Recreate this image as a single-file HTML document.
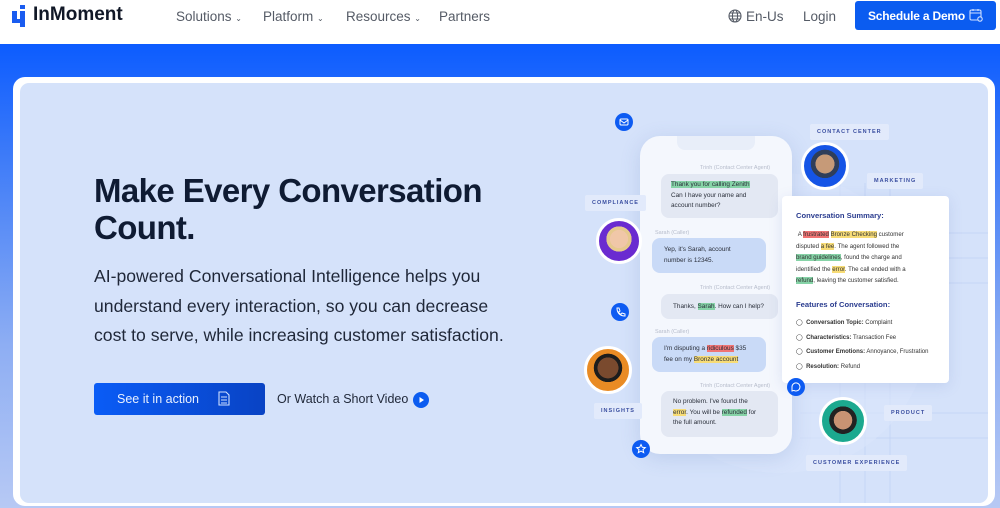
<!DOCTYPE html>
<html><head><meta charset="utf-8"><style>
*{margin:0;padding:0;box-sizing:border-box}
body{width:1000px;height:508px;overflow:hidden;font-family:"Liberation Sans",sans-serif;background:#fff;position:relative}
.a{position:absolute}
.nav{color:#555b66;font-size:13.5px;top:9px}
.band{left:0;top:44px;width:1000px;height:464px;background:linear-gradient(#0c5cff 0%,#3f7cf8 25%,#8eaef3 65%,#b7c9f4 100%)}
.card{left:13px;top:77px;width:982px;height:429px;background:#fff;border-radius:12px}
.inner{left:20px;top:83px;width:968px;height:420px;background:#d5e2fa;border-radius:9px;overflow:hidden}
h1{position:absolute;left:94px;top:172px;font-size:33px;line-height:37px;color:#0f1b33;letter-spacing:-0.6px;font-weight:bold}
.p{left:94px;top:262px;width:440px;font-size:17.6px;line-height:29.5px;color:#1f2738}
.tag{background:#e2eafb;color:#3a4ea0;font-size:5.5px;font-weight:bold;letter-spacing:1px;padding:5px 7px;border-radius:2px}
.bub{background:#e3e8f3;border-radius:8px;font-size:6.4px;line-height:10.5px;color:#2a2f3a;padding:6px 10px;white-space:nowrap}
.bub.b{background:#c9daf7}
.lbl{font-size:5.5px;color:#b6bccb}
.g{background:#86d3a7}.y{background:#f7dc77}.r{background:#f07474}
.av{border-radius:50%;border:3px solid #fff}
.ic{width:18px;height:18px;border-radius:50%;background:#0d5bf2}
.sm{font-size:6.1px;line-height:11.6px;color:#333;white-space:nowrap}
</style></head><body>
<svg class="a" style="left:12px;top:5px" width="14" height="22" viewBox="0 0 14 22"><rect x="0" y="6" width="5" height="12" fill="#1a5cf0"/><rect x="8" y="0" width="5" height="4" fill="#1a5cf0"/><rect x="8" y="6" width="5" height="16" fill="#1a5cf0"/><rect x="4" y="14" width="5" height="4" fill="#1a5cf0"/></svg>
<div class="a" style="left:33px;top:4px;font-size:19px;font-weight:bold;color:#111827">InMoment</div>
<div class="a nav" style="left:176px">Solutions <span style="font-size:8px">⌄</span></div>
<div class="a nav" style="left:263px">Platform <span style="font-size:8px">⌄</span></div>
<div class="a nav" style="left:346px">Resources <span style="font-size:8px">⌄</span></div>
<div class="a nav" style="left:439px">Partners</div>
<svg class="a" style="left:728px;top:9px" width="14" height="14" viewBox="0 0 14 14" fill="none" stroke="#555b66" stroke-width="1.1"><circle cx="7" cy="7" r="6"/><ellipse cx="7" cy="7" rx="2.6" ry="6"/><path d="M1 7h12M2 4h10M2 10h10"/></svg>
<div class="a nav" style="left:746px">En-Us</div>
<div class="a nav" style="left:803px">Login</div>
<div class="a" style="left:855px;top:1px;width:141px;height:29px;background:#0b5cf0;border-radius:3px;color:#fff;font-size:12px;font-weight:bold;padding:8px 0 0 13px;letter-spacing:-0.2px">Schedule a Demo</div>
<svg class="a" style="left:969px;top:8px" width="14" height="14" viewBox="0 0 14 14" fill="none" stroke="#cfe0ff" stroke-width="1.1"><rect x="1" y="2" width="11" height="10" rx="1.5"/><path d="M1 5h11M4 1v2M9 1v2"/><circle cx="11" cy="11" r="2.2" fill="#0b5cf0"/></svg>
<div class="a band"></div>
<div class="a card"></div>
<div class="a inner">
<svg class="a" style="left:620px;top:40px" width="360" height="400"><g stroke="#c5d5f5" stroke-width="1" fill="none"><path d="M160 110h200M160 135h200M160 160h200M160 290h200M160 315h200M200 60v340M225 60v340M250 60v340"/></g><circle cx="140" cy="200" r="150" fill="#dbe6fb" opacity=".6"/></svg>
</div>
<h1>Make Every Conversation<br>Count.</h1>
<div class="a p">AI-powered Conversational Intelligence helps you<br>understand every interaction, so you can decrease<br>cost to serve, while increasing customer satisfaction.</div>
<div class="a" style="left:94px;top:383px;width:171px;height:32px;border-radius:3px;background:linear-gradient(90deg,#0a5cf6,#0943c4);color:#e8f0ff;font-size:12.5px;padding:9px 0 0 23px">See it in action</div>
<svg class="a" style="left:218px;top:391px" width="12" height="15" viewBox="0 0 12 15" fill="none" stroke="#cfe0ff" stroke-width="1.1"><path d="M1 1h7l3 3v10H1z"/><path d="M3 6h6M3 9h6M3 12h6"/></svg>
<div class="a" style="left:277px;top:392px;font-size:12.5px;color:#1f2738">Or Watch a Short Video</div>
<div class="a" style="left:413px;top:392px;width:16px;height:16px;border-radius:50%;background:#0b5cf0"></div>
<svg class="a" style="left:413px;top:392px" width="16" height="16"><path d="M6.5 5l4.5 3-4.5 3z" fill="#fff"/></svg>

<div class="a" style="left:640px;top:136px;width:152px;height:318px;background:#f4f7fd;border-radius:20px;box-shadow:0 4px 20px rgba(80,110,180,.18)"></div>
<div class="a" style="left:677px;top:136px;width:78px;height:14px;background:#e8eef9;border-radius:0 0 8px 8px"></div>
<div class="a lbl" style="left:700px;top:165px">Trinh (Contact Center Agent)</div>
<div class="a bub" style="left:661px;top:174px;width:117px;height:44px;padding-top:6px"><span class="g">Thank you for calling Zenith</span><br>Can I have your name and<br>account number?</div>
<div class="a lbl" style="left:655px;top:230px">Sarah (Caller)</div>
<div class="a bub b" style="left:652px;top:238px;width:114px;height:35px;padding:7px 12px">Yep, it's Sarah, account<br>number is 12345.</div>
<div class="a lbl" style="left:700px;top:285px">Trinh (Contact Center Agent)</div>
<div class="a bub" style="left:661px;top:294px;width:117px;height:25px;padding:8px 12px">Thanks, <span class="g">Sarah</span>. How can I help?</div>
<div class="a lbl" style="left:655px;top:329px">Sarah (Caller)</div>
<div class="a bub b" style="left:652px;top:337px;width:114px;height:35px;padding:7px 12px">I'm disputing a <span class="r">ridiculous</span> $35<br>fee on my <span class="y">Bronze account</span></div>
<div class="a lbl" style="left:700px;top:383px">Trinh (Contact Center Agent)</div>
<div class="a bub" style="left:661px;top:391px;width:117px;height:46px;padding:6px 12px">No problem. I've found the<br><span class="y">error</span>. You will be <span class="g">refunded</span> for<br>the full amount.</div>

<div class="a" style="left:782px;top:196px;width:167px;height:187px;background:#fff;border-radius:4px;box-shadow:0 3px 14px rgba(80,110,180,.15)"></div>
<div class="a" style="left:796px;top:211px;font-size:7.6px;font-weight:bold;color:#2a3c8f">Conversation Summary:</div>
<div class="a sm" style="left:796px;top:229px">&nbsp;A <span class="r">frustrated</span> <span class="y">Bronze Checking</span> customer<br>disputed <span class="y">a fee</span>. The agent followed the<br><span class="g">brand guidelines</span>, found the charge and<br>identified the <span class="y">error</span>. The call ended with a<br><span class="g">refund</span>, leaving the customer satisfied.</div>
<div class="a" style="left:796px;top:300px;font-size:7.6px;font-weight:bold;color:#2a3c8f">Features of Conversation:</div>
<div class="a sm" style="left:796px;top:316px;line-height:14.5px;font-size:6px">◯&nbsp; <b>Conversation Topic:</b> Complaint<br>◯&nbsp; <b>Characteristics:</b> Transaction Fee<br>◯&nbsp; <b>Customer Emotions:</b> Annoyance, Frustration<br>◯&nbsp; <b>Resolution:</b> Refund</div>

<div class="a tag" style="left:810px;top:124px">CONTACT CENTER</div>
<div class="a tag" style="left:867px;top:173px">MARKETING</div>
<div class="a tag" style="left:585px;top:195px">COMPLIANCE</div>
<div class="a tag" style="left:594px;top:403px">INSIGHTS</div>
<div class="a tag" style="left:884px;top:405px">PRODUCT</div>
<div class="a tag" style="left:806px;top:455px">CUSTOMER EXPERIENCE</div>

<div class="a av" style="left:801px;top:142px;width:48px;height:48px;background:radial-gradient(circle at 50% 45%,#c69a78 0 30%,#2f3e5a 31% 45%,#1554e6 46%)"></div>
<div class="a av" style="left:596px;top:218px;width:46px;height:46px;background:radial-gradient(circle at 50% 45%,#f0c7a8 0 30%,#e6c98e 31% 42%,#6a2bd0 43%)"></div>
<div class="a av" style="left:584px;top:346px;width:48px;height:48px;background:radial-gradient(circle at 50% 45%,#7a4a2e 0 33%,#1d1d1d 34% 45%,#e98b24 46%)"></div>
<div class="a av" style="left:819px;top:397px;width:48px;height:48px;background:radial-gradient(circle at 50% 48%,#c99373 0 30%,#222 31% 45%,#1ca98f 46%)"></div>

<div class="a ic" style="left:615px;top:113px"></div>
<div class="a ic" style="left:611px;top:303px"></div>
<div class="a ic" style="left:787px;top:378px"></div>
<div class="a ic" style="left:632px;top:440px"></div>
<svg class="a" style="left:615px;top:113px" width="18" height="18" fill="none" stroke="#fff" stroke-width="1"><rect x="5" y="6" width="8" height="6" rx="1"/><path d="M5 7l4 3 4-3"/></svg>
<svg class="a" style="left:611px;top:303px" width="18" height="18" fill="none" stroke="#fff" stroke-width="1"><path d="M6 5l2 0 1 3-1.5 1a6 6 0 0 0 2.5 2.5l1-1.5 3 1v2c-5 0-8-3-8-8z"/></svg>
<svg class="a" style="left:787px;top:378px" width="18" height="18" fill="none" stroke="#fff" stroke-width="1"><path d="M5 9a4 4 0 1 1 2 3.4L5 13z"/></svg>
<svg class="a" style="left:632px;top:440px" width="18" height="18" fill="none" stroke="#fff" stroke-width="1"><path d="M9 4.5l1.3 2.8 3 .3-2.3 2 .7 3L9 11.1 6.3 12.6l.7-3-2.3-2 3-.3z"/></svg>
</body></html>
